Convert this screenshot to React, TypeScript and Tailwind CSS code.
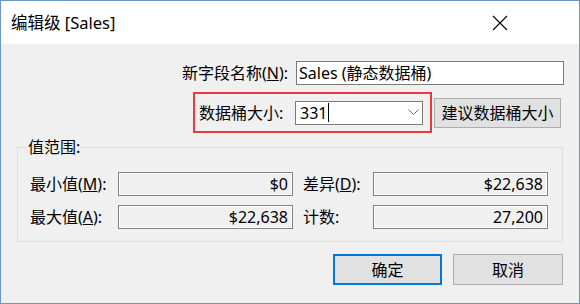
export default function App() {
  return (
    <div className="w-[580px] h-[304px] border border-[#6d95c6] flex flex-col bg-[#f0f0f0] font-['Noto_Sans','Noto_Sans_CJK_SC',sans-serif] text-[16px] leading-[24px] text-black">
      <div className="h-[43px] shrink-0 bg-white flex items-center justify-between pl-[10px] pr-[71px]">
        <span className="text-[16.5px]">编辑级 [Sales]</span>
        <svg width="16" height="16" viewBox="0 0 16 16" className="block">
          <path d="M1 1 L15 15 M15 1 L1 15" stroke="#000" strokeWidth="1.1" fill="none" />
        </svg>
      </div>

      <div className="flex flex-col">
        {/* Row 1 */}
        <div className="mt-[17px] flex items-center justify-end pr-[15px]">
          <span className="mr-[8px]">
            新字段名称(<span className="underline">N</span>):
          </span>
          <div className="w-[268px] h-[24px] border border-[#7a7a7a] bg-white flex items-center pl-[2px] leading-[22px]">
            Sales (静态数据桶)
          </div>
        </div>

        {/* Row 2 */}
        <div className="mt-[7px] ml-[192px] flex items-center">
          <div className="w-[239px] h-[41px] border-2 border-[#ea3a3f] flex items-center pl-[4px] pr-[7px]">
            <span>数据桶大小:</span>
            <div className="ml-auto w-[128px] h-[24px] border border-[#7a7a7a] bg-white flex items-center pl-[4px] pr-[3px] leading-[22px]">
              <span>331</span>
              <span className="ml-[1px] w-[1px] h-[19px] bg-black" />
              <svg width="11" height="7" viewBox="0 0 11 7" className="ml-auto block">
                <polyline points="0.5,0.5 5.5,5.5 10.5,0.5" stroke="#6e6e6e" strokeWidth="1" fill="none" />
              </svg>
            </div>
          </div>
          <div className="ml-[2px] w-[127px] h-[30px] border border-[#adadad] bg-[#e1e1e1] flex items-center justify-center leading-[22px] whitespace-nowrap">
            建议数据桶大小
          </div>
        </div>

        {/* Group box */}
        <div className="mt-[14px] ml-[16px] w-[546px] h-[95px] border border-[#dcdcdc] relative flex flex-col pl-[12px] pt-[24px] gap-[9px]">
          <span className="absolute -top-[13px] left-[9px] bg-[#f0f0f0] px-[1px]">值范围:</span>
          <div className="flex items-center">
            <span className="w-[88px]">
              最小值(<span className="underline">M</span>):
            </span>
            <div className="w-[175px] h-[24px] border border-[#828282] shadow-[inset_0_0_0_1px_#fff] flex items-center justify-end pr-[4px] leading-[22px]">
              $0
            </div>
            <span className="ml-[10px] w-[70px]">
              差异(<span className="underline">D</span>):
            </span>
            <div className="w-[175px] h-[24px] border border-[#828282] shadow-[inset_0_0_0_1px_#fff] flex items-center justify-end pr-[4px] leading-[22px]">
              $22,638
            </div>
          </div>
          <div className="flex items-center">
            <span className="w-[88px]">
              最大值(<span className="underline">A</span>):
            </span>
            <div className="w-[175px] h-[24px] border border-[#828282] shadow-[inset_0_0_0_1px_#fff] flex items-center justify-end pr-[4px] leading-[22px]">
              $22,638
            </div>
            <span className="ml-[10px] w-[70px]">计数:</span>
            <div className="w-[175px] h-[24px] border border-[#828282] shadow-[inset_0_0_0_1px_#fff] flex items-center justify-end pr-[4px] leading-[22px]">
              27,200
            </div>
          </div>
        </div>

        {/* Buttons */}
        <div className="mt-[12px] flex justify-end gap-[11px] pr-[16px]">
          <div className="w-[109px] h-[31px] border-2 border-[#0078d7] bg-[#e1e1e1] flex items-center justify-center leading-[22px]">
            确定
          </div>
          <div className="w-[110px] h-[31px] border border-[#adadad] bg-[#e1e1e1] flex items-center justify-center leading-[22px]">
            取消
          </div>
        </div>
      </div>
    </div>
  );
}
